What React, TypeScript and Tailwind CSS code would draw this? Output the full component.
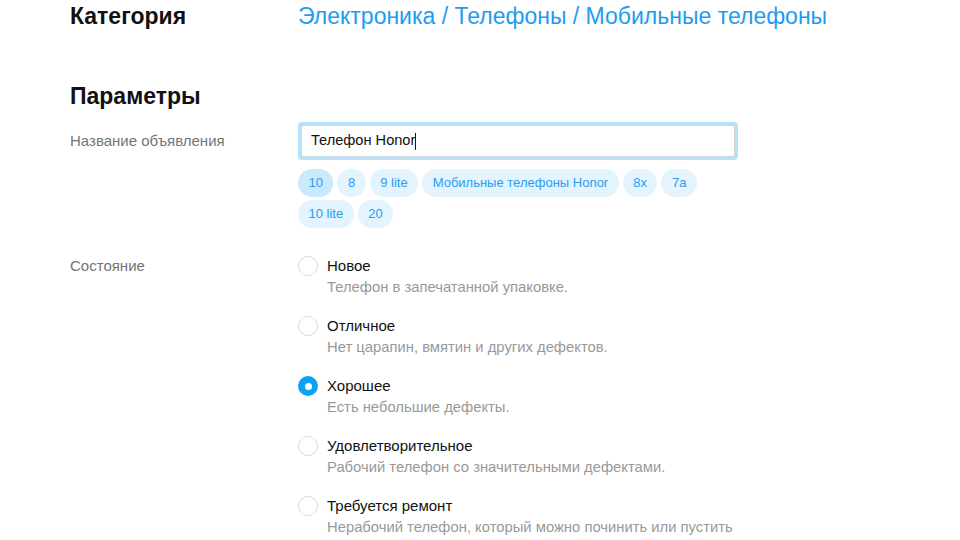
const chips = [
  { label: "10", active: true },
  { label: "8" },
  { label: "9 lite" },
  { label: "Мобильные телефоны Honor" },
  { label: "8x" },
  { label: "7a" },
  { label: "10 lite" },
  { label: "20" },
];

const conditions = [
  { title: "Новое", desc: "Телефон в запечатанной упаковке." },
  { title: "Отличное", desc: "Нет царапин, вмятин и других дефектов." },
  { title: "Хорошее", desc: "Есть небольшие дефекты.", checked: true },
  { title: "Удовлетворительное", desc: "Рабочий телефон со значительными дефектами." },
  { title: "Требуется ремонт", desc: "Нерабочий телефон, который можно починить или пустить" },
];

const App = () => {
  return (
    <div
      className="w-[960px] h-[540px] overflow-hidden bg-white pl-[70px] pt-[3px]"
      style={{ fontFamily: '"Liberation Sans", Arial, sans-serif' }}
    >
      <div className="flex items-center h-[26px]">
        <h2 className="w-[228px] text-[23px] font-bold text-[#111]">Категория</h2>
        <p className="text-[23px] text-[#1e9cf0]">Электроника / Телефоны / Мобильные телефоны</p>
      </div>

      <h2 className="mt-[54px] text-[23px] font-bold leading-[26px] text-[#111]">Параметры</h2>

      <div className="flex mt-[13px]">
        <div className="w-[228px] h-[38px] flex items-center text-[15px] text-[#757575]">
          Название объявления
        </div>
        <div className="w-[440px]">
          <div className="h-[38px] rounded-[4px] bg-[#b5e2fd] p-[3px]">
            <div className="h-full rounded-[2px] border border-[#cfd4d8] bg-white flex items-center pl-[9px] text-[14.6px] text-[#111]">
              Телефон Honor
              <span className="inline-block w-px h-[17px] bg-[#111]" />
            </div>
          </div>
          <div className="flex flex-wrap gap-x-[4px] gap-y-[3px] mt-[9px]">
            {chips.map((c) => (
              <span
                key={c.label}
                className={
                  "h-[28px] px-[10.5px] rounded-full flex items-center text-[13px] text-[#2a9df2] " +
                  (c.active ? "bg-[#cbe9fd]" : "bg-[#e3f4fe]")
                }
              >
                {c.label}
              </span>
            ))}
          </div>
        </div>
      </div>

      <div className="flex mt-[28px]">
        <div className="w-[228px] h-[20px] flex items-center text-[15px] text-[#757575]">Состояние</div>
        <div className="flex flex-col gap-[18px]">
          {conditions.map((c) => (
            <div key={c.title} className="flex">
              {c.checked ? (
                <span className="w-[20px] h-[20px] rounded-full bg-[#0ca3f7] flex items-center justify-center">
                  <span className="w-[7px] h-[7px] rounded-full bg-white" />
                </span>
              ) : (
                <span className="w-[20px] h-[20px] rounded-full border border-[#d9d9d9] bg-white" />
              )}
              <div className="ml-[9px]">
                <p className="h-[20px] flex items-center text-[15px] text-[#111]">{c.title}</p>
                <p className="h-[22px] flex items-center text-[14.8px] text-[#999]">{c.desc}</p>
              </div>
            </div>
          ))}
        </div>
      </div>
    </div>
  );
};

export default App;
